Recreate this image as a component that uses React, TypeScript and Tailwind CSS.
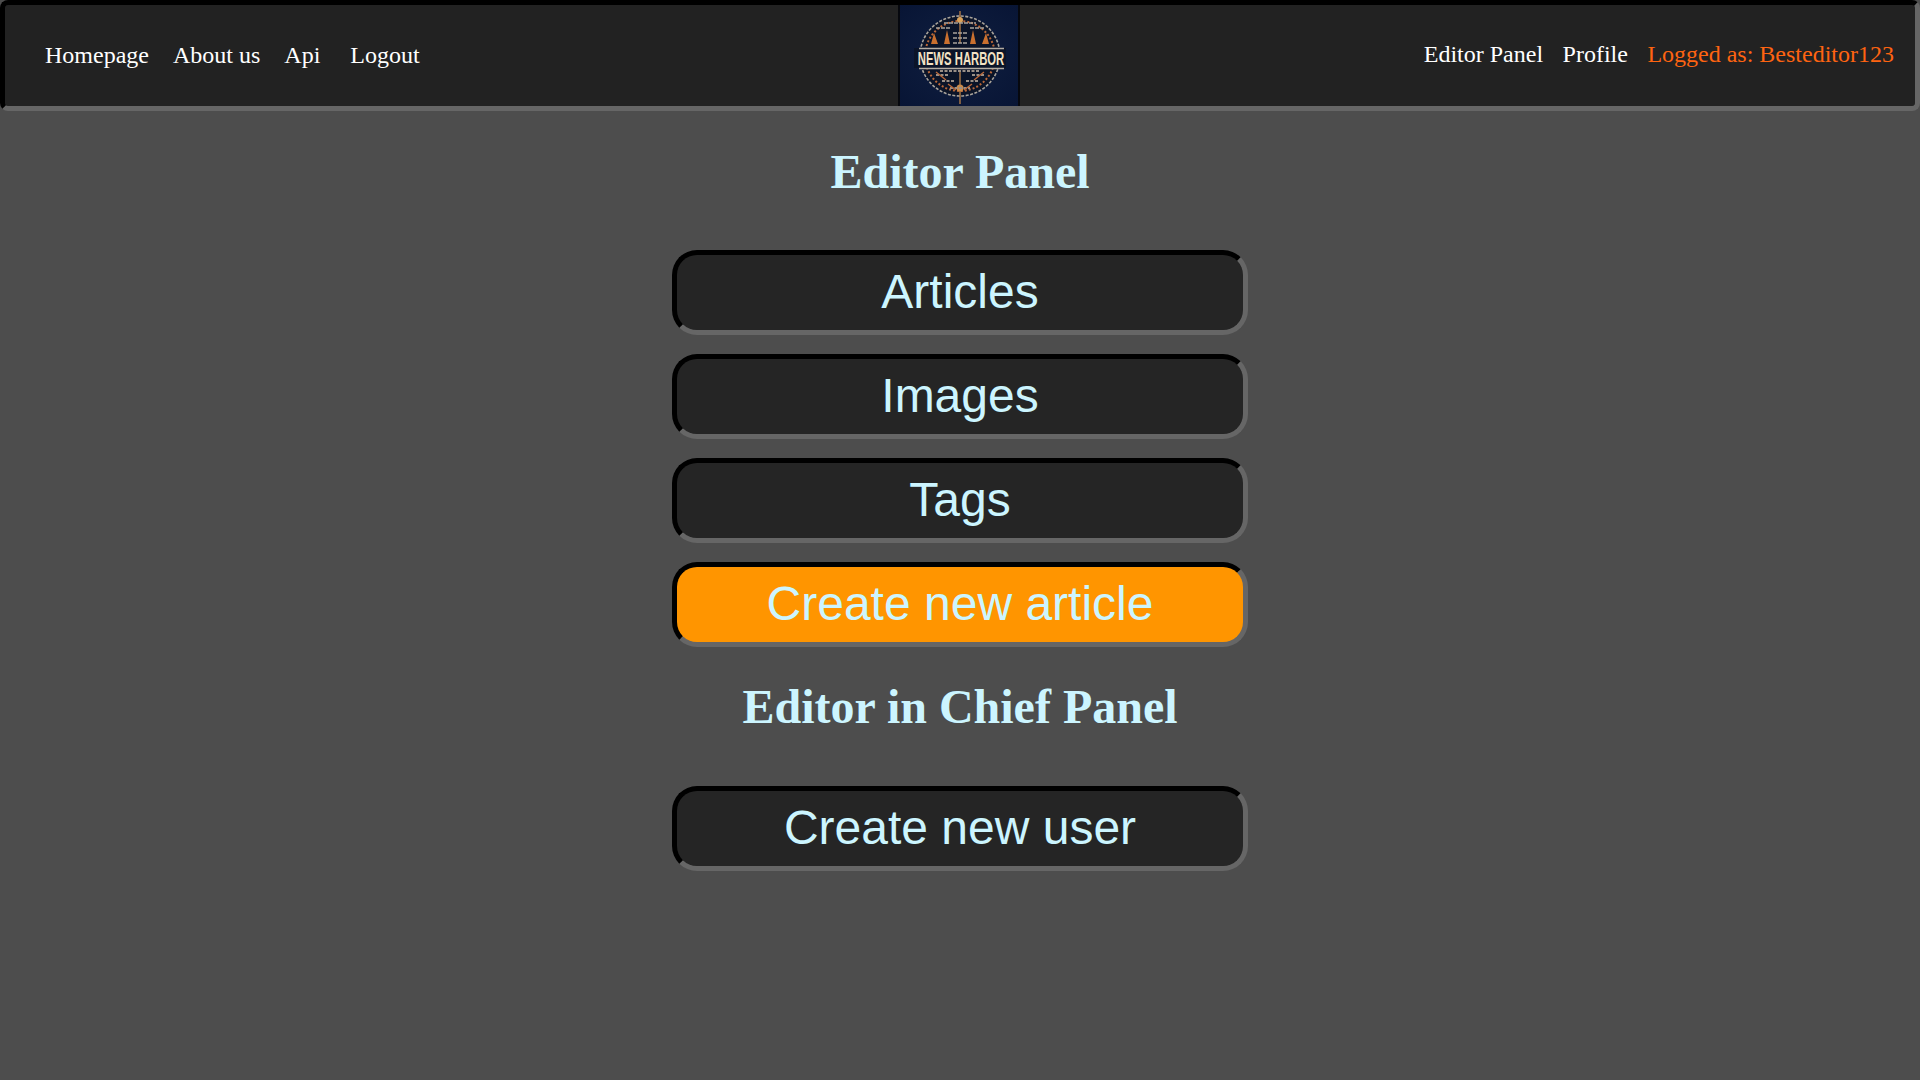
import React from 'react';

const bevel = 'border-[5px] border-t-black border-l-black border-b-[#666666] border-r-[#666666]';

const NewsHarborLogo = () => (
	<svg viewBox="0 0 118 101" className="block h-full w-full" aria-label="News Harbor logo">
		<defs>
			<radialGradient id="navy" cx="50%" cy="50%" r="70%">
				<stop offset="0%" stopColor="#101f40" />
				<stop offset="100%" stopColor="#081535" />
			</radialGradient>
		</defs>
		<rect width="118" height="101" fill="url(#navy)" />
		<circle cx="60" cy="51" r="40" fill="#0b1428" stroke="#a9a39a" strokeWidth="1.6" strokeDasharray="3 1.5" />
		<circle cx="60" cy="51" r="35" fill="none" stroke="#b9683a" strokeWidth="2" strokeDasharray="2 2" />
		<path d="M60 6V38M60 66V99" stroke="#c98a4a" strokeWidth="1.2" />
		<circle cx="60" cy="15" r="3" fill="#d9a25a" />
		<circle cx="60" cy="83" r="3.5" fill="#c98a4a" />
		<path d="M31 39l3-11 4 11zM44 39l3-14 3 14zM70 39l3-14 3 14zM82 39l4-11 3 11z" fill="#c9702f" />
		<path d="M36 23h14M70 23h14M44 18h32M53 28h14M53 33h14M53 38h14" stroke="#a9a39a" strokeWidth="1.6" strokeDasharray="4 1" />
		<path d="M36 70h12M72 70h12M42 76h12M66 76h12M50 83h20M40 66h40" stroke="#9a8f86" strokeWidth="1.8" strokeDasharray="3 1.5" />
		<path d="M36 67l10 8M84 67l-10 8M48 79l8 6M72 79l-8 6" stroke="#b9683a" strokeWidth="1.4" />
		<rect x="14" y="43" width="92" height="20" fill="#0b1428" />
		<path d="M19 43.5H104M19 63.5H104" stroke="#b3aca2" strokeWidth="1.4" />
		<text transform="translate(61 60) scale(0.94 1.58)" textAnchor="middle" fontFamily="'Liberation Sans', sans-serif" fontWeight="700" fontSize="12" fill="#f2e2c4">NEWS HARBOR</text>
	</svg>
);

const PanelButton = ({ label, active }: { label: string; active?: boolean }) => (
	<a className={`${bevel} mb-[19px] flex h-[85px] w-[576px] items-center justify-center rounded-[25px] pb-[2px] text-[48px] text-[#ccf5ff] ${active ? 'bg-[#ff9500]' : 'bg-[#252525]'}`}>
		{label}
	</a>
);

const PanelTitle = ({ label }: { label: string }) => (
	<h1 className="font-['Liberation_Serif',serif] text-[48px] font-bold leading-[55px] text-[#ccf5ff]">{label}</h1>
);

const App = () => {
	return (
		<div className="flex min-h-[1080px] flex-col bg-[#4d4d4d] font-['Liberation_Sans',sans-serif]">
			<nav className={`${bevel} grid h-[111px] grid-cols-[893px_122px_1fr] rounded-[8px] bg-[#222222] font-['Liberation_Serif',serif] text-[24px] text-white`}>
				<ul className="flex items-center pb-[2px] pl-[40px]">
					<li className="mr-[24px]">Homepage</li>
					<li className="mr-[24px]">About us</li>
					<li className="mr-[30px]">Api</li>
					<li>Logout</li>
				</ul>
				<div className="border-x-2 border-[#06080e]">
					<NewsHarborLogo />
				</div>
				<ul className="flex items-center justify-end gap-[19.5px] pr-[21px] pb-[4px]">
					<li>Editor Panel</li>
					<li>Profile</li>
					<li className="text-[#ff6411]">Logged as: Besteditor123</li>
				</ul>
			</nav>
			<main className="flex flex-col items-center">
				<div className="mt-[33px] mb-[51px]">
					<PanelTitle label="Editor Panel" />
				</div>
				<PanelButton label="Articles" />
				<PanelButton label="Images" />
				<PanelButton label="Tags" />
				<PanelButton label="Create new article" active />
				<div className="mt-[13px] mb-[52px]">
					<PanelTitle label="Editor in Chief Panel" />
				</div>
				<PanelButton label="Create new user" />
			</main>
		</div>
	);
};

export default App;
